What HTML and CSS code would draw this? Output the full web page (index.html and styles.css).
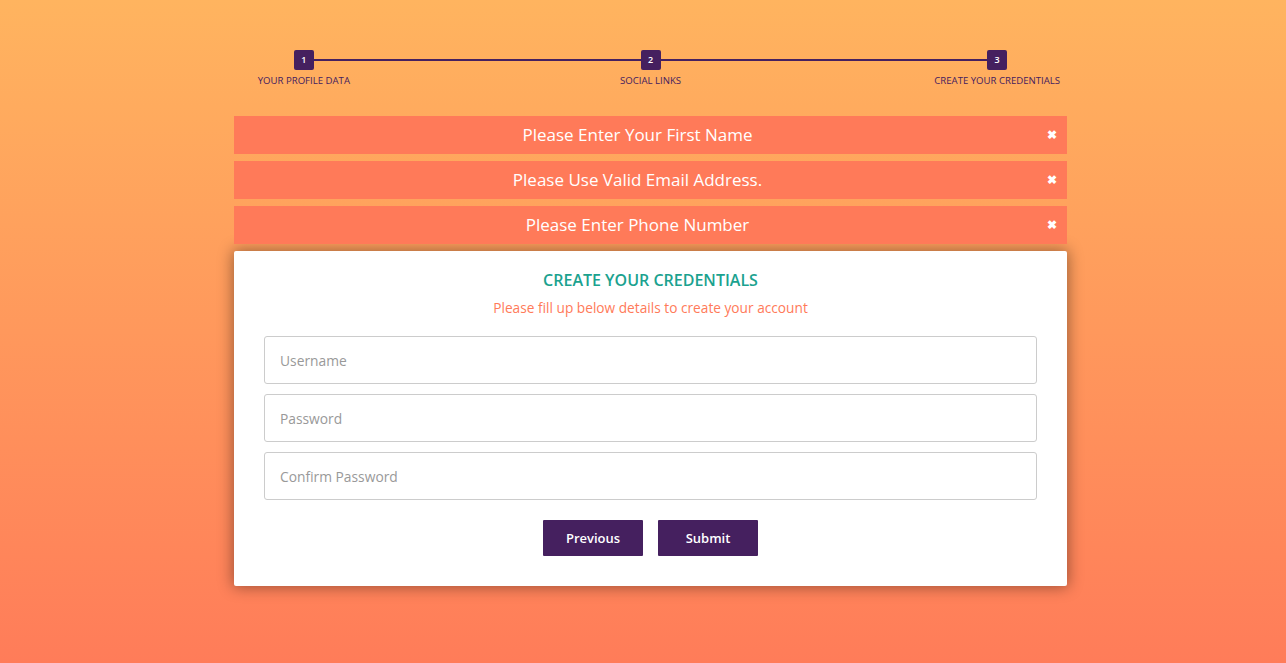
FILE: index.html
```html
<!DOCTYPE html>
<html lang="en">
<head>
<meta charset="utf-8">
<title>Create your credentials</title>
<link rel="stylesheet" href="styles.css">
</head>
<body>
<div class="page">
  <ul class="progress">
    <li class="step"><span class="num">1</span><span class="label">Your Profile Data</span></li>
    <li class="step"><span class="num">2</span><span class="label">Social Links</span></li>
    <li class="step"><span class="num">3</span><span class="label">Create Your Credentials</span></li>
  </ul>
  <div class="main">
    <div class="alerts">
      <div class="alert">Please Enter Your First Name<span class="close">&#x2716;</span></div>
      <div class="alert">Please Use Valid Email Address.<span class="close">&#x2716;</span></div>
      <div class="alert">Please Enter Phone Number<span class="close">&#x2716;</span></div>
    </div>
    <form class="card">
      <h2 class="title">CREATE YOUR CREDENTIALS</h2>
      <p class="subtitle">Please fill up below details to create your account</p>
      <input class="field" type="text" placeholder="Username">
      <input class="field" type="password" placeholder="Password">
      <input class="field" type="password" placeholder="Confirm Password">
      <div class="actions">
        <button type="button" class="btn">Previous</button>
        <button type="button" class="btn">Submit</button>
      </div>
    </form>
  </div>
</div>
</body>
</html>
```
FILE: styles.css
```css
html, body {
  margin: 0;
  padding: 0;
  height: 100%;
}
body {
  background: linear-gradient(to bottom, #ffb45f 0%, #ff7c59 100%);
  font-family: "Open Sans", "Liberation Sans", sans-serif;
  color: #45205f;
}
.page {
  display: flex;
  flex-direction: column;
  align-items: center;
  padding-top: 50px;
  padding-left: 15px;
}
.progress {
  list-style: none;
  margin: 0;
  padding: 0;
  display: flex;
  width: 1040px;
}
.step {
  position: relative;
  flex: 1;
  display: flex;
  flex-direction: column;
  align-items: center;
}
.step::before {
  content: "";
  position: absolute;
  top: 9px;
  left: 50%;
  width: 100%;
  height: 2px;
  background: #45205f;
  z-index: 0;
}
.step:last-child::before {
  display: none;
}
.num {
  position: relative;
  z-index: 1;
  width: 20px;
  height: 20px;
  border-radius: 2px;
  background: #45205f;
  color: #fff;
  font-size: 9px;
  font-weight: 600;
  line-height: 20px;
  text-align: center;
}
.label {
  margin-top: 5px;
  font-size: 9.6px;
  text-transform: uppercase;
  line-height: 12px;
  color: #45205f;
}
.main {
  width: 833px;
  margin-top: 29px;
}
.alerts {
  display: flex;
  flex-direction: column;
  gap: 7px;
}
.alert {
  position: relative;
  height: 38px;
  line-height: 38px;
  padding-right: 26px;
  background: #ff7a59;
  color: #fff;
  font-size: 17px;
  text-align: center;
}
.close {
  position: absolute;
  right: 10px;
  top: 0;
  font-size: 12px;
  font-weight: 700;
}
.card {
  margin-top: 7px;
  background: #fff;
  border-radius: 2px;
  box-shadow: 0 0 15px 1px rgba(0, 0, 0, 0.4);
  padding: 19px 30px 30px;
  display: flex;
  flex-direction: column;
  gap: 10px;
}
.title {
  margin: 0;
  font-size: 16px;
  font-weight: 600;
  color: #1ba28f;
  text-align: center;
  line-height: 20px;
}
.subtitle {
  margin: -2px 0 8px;
  font-size: 13.7px;
  color: #ff7a59;
  text-align: center;
  line-height: 20px;
}
.field {
  box-sizing: border-box;
  height: 48px;
  padding: 0 15px;
  border: 1px solid #ccc;
  border-radius: 3px;
  font-family: inherit;
  font-size: 13.8px;
  color: #2c3e50;
}
.field::placeholder {
  color: #999;
}
.actions {
  display: flex;
  justify-content: center;
  gap: 15px;
  margin-top: 10px;
}
.btn {
  width: 100px;
  height: 36px;
  border: 0;
  border-radius: 1px;
  background: #45205f;
  color: #fff;
  font-family: inherit;
  font-size: 13px;
  font-weight: 600;
}
```
